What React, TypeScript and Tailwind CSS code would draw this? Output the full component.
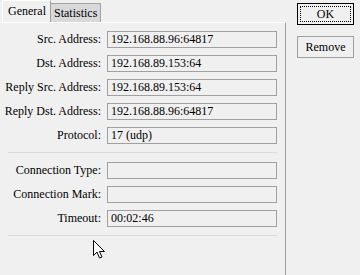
import React from "react";

const rows1 = [
  { label: "Src. Address:", value: "192.168.88.96:64817" },
  { label: "Dst. Address:", value: "192.168.89.153:64" },
  { label: "Reply Src. Address:", value: "192.168.89.153:64" },
  { label: "Reply Dst. Address:", value: "192.168.88.96:64817" },
  { label: "Protocol:", value: "17 (udp)" },
];

const rows2 = [
  { label: "Connection Type:", value: "" },
  { label: "Connection Mark:", value: "" },
  { label: "Timeout:", value: "00:02:46" },
];

const Field = ({ label, value }: { label: string; value: string }) => (
  <div className="flex items-center h-[24px]">
    <div className="w-[102px] text-right pr-[1px] whitespace-nowrap">{label}</div>
    <div className="ml-[5px] w-[170px] h-[17px] border border-[#a0a0a0] bg-[#f0f0f0] leading-[15px] pl-[3px] whitespace-nowrap">
      {value}
    </div>
  </div>
);

const Cursor = () => (
  <svg width="13" height="20" viewBox="0 0 13 20" className="absolute left-[93px] top-[240px]">
    <path
      d="M0.5 0.5 L0.5 15.5 L4 12 L6.5 18 L9 17 L6.5 11.5 L11.5 11.5 Z"
      fill="#ffffff"
      stroke="#000000"
      strokeWidth="1"
    />
  </svg>
);

export default function App() {
  return (
    <div
      className="relative w-[360px] h-[275px] bg-[#f0f0f0] text-[12px] text-black flex overflow-hidden"
      style={{ fontFamily: '"Liberation Serif", serif' }}
    >
      <div className="w-[286px] flex flex-col">
        <div className="flex items-end h-[22px] pl-[2px]">
          <div className="h-[22px] w-[49px] border-t border-l border-white border-r border-r-[#a0a0a0] bg-[#f0f0f0] pl-[5px] pt-[3px] leading-[14px]">
            General
          </div>
          <div className="h-[19px] w-[50px] border-t border-r border-[#a0a0a0] bg-[#d9d9d9] pl-[3px] pt-[2px] leading-[14px]">
            Statistics
          </div>
        </div>
        <div className="flex-1 border-t border-white border-r border-r-[#a0a0a0] pt-[4px] pl-[0px]">
          {rows1.map((r) => (
            <Field key={r.label} {...r} />
          ))}
          <div className="ml-[8px] w-[269px] h-[1px] bg-[#dcdcdc] my-[5px]" />
          {rows2.map((r) => (
            <Field key={r.label} {...r} />
          ))}
          <div className="ml-[8px] w-[269px] h-[1px] bg-[#dcdcdc] my-[5px]" />
        </div>
      </div>
      <div className="flex flex-col items-center pl-[11px] pt-[3px] gap-[11px]">
        <div className="w-[57px] h-[22px] border border-black p-[2px]">
          <div className="w-full h-full border border-dotted border-black flex items-center justify-center">
            OK
          </div>
        </div>
        <div className="w-[57px] h-[22px] border border-[#a0a0a0] flex items-center justify-center">
          Remove
        </div>
      </div>
      <Cursor />
    </div>
  );
}
